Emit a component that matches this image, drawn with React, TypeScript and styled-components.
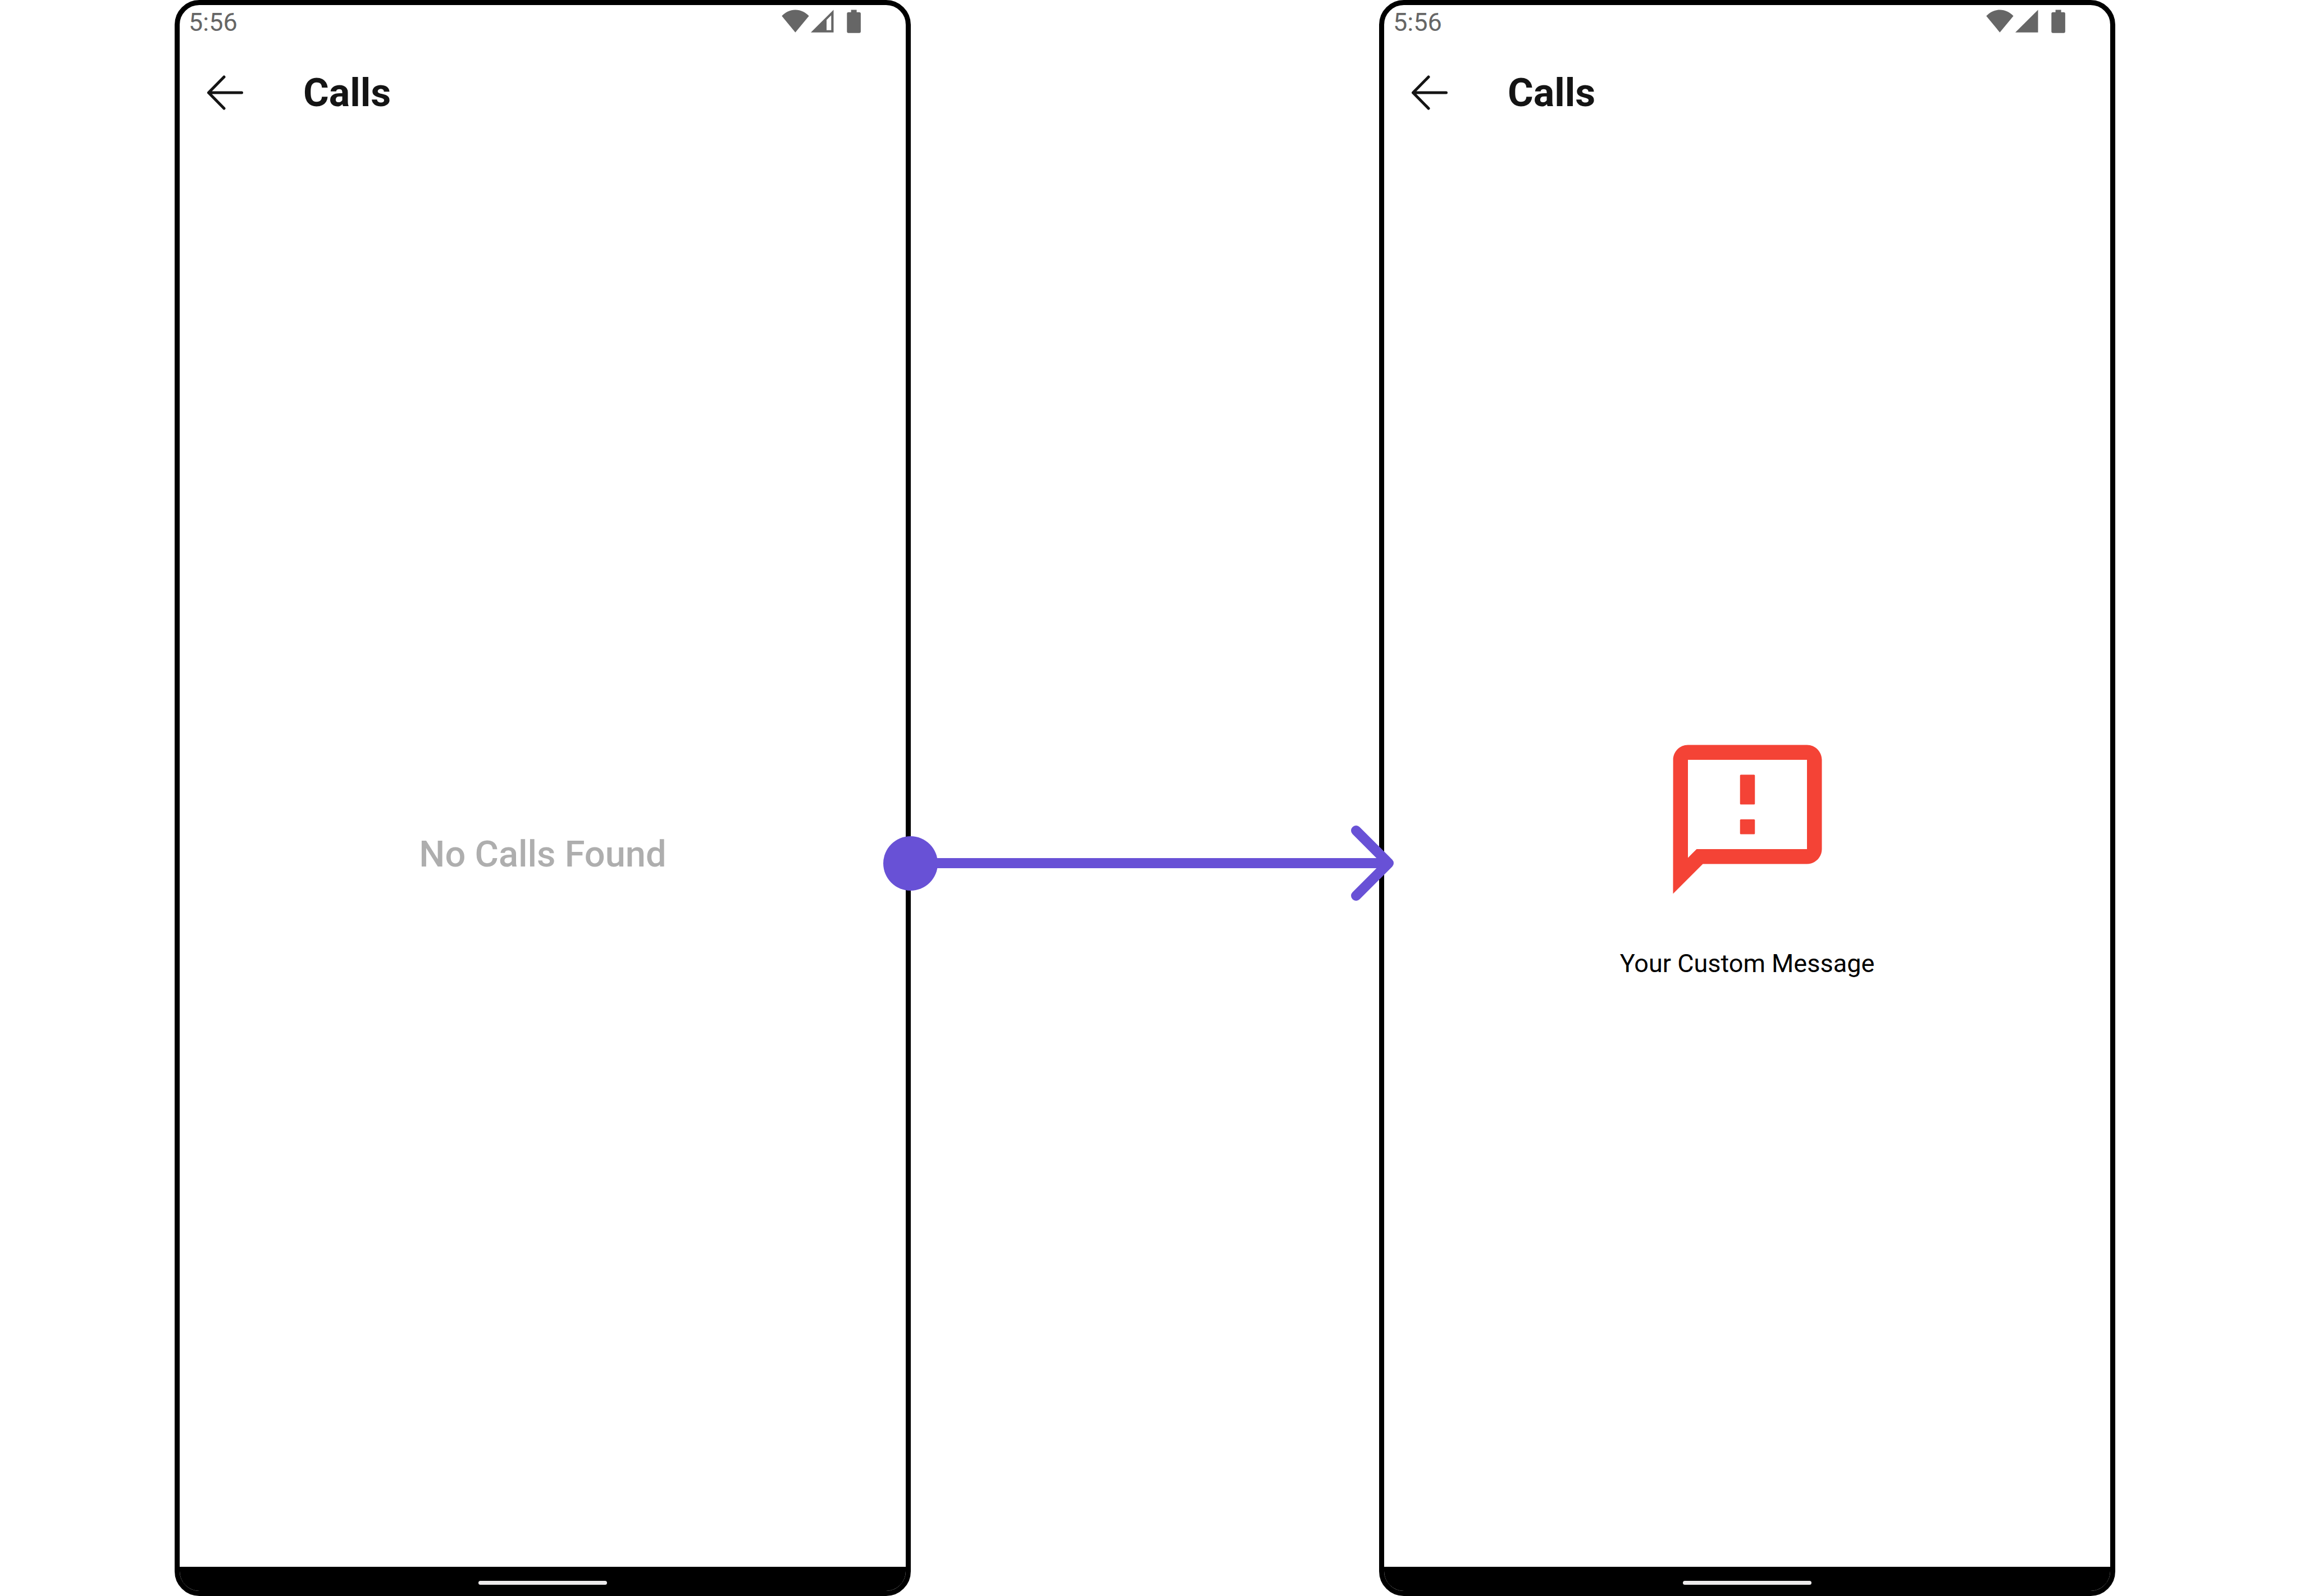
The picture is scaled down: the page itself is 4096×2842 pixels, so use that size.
import React from "react";
import styled, { createGlobalStyle } from "styled-components";

const GlobalStyle = createGlobalStyle`
  *, *::before, *::after { box-sizing: border-box; }
  body {
    margin: 0;
    background: #ffffff;
    font-family: Roboto, "Noto Sans", sans-serif;
  }
`;

const accent = "#6851d6";
const statusGrey = "#666666";

const Stage = styled.main`
  display: grid;
  grid-template-columns: 311fr 1311fr 834fr 1311fr 329fr;
  min-height: 100vh;
`;

const Phone = styled.section<{ $column: number }>`
  grid-column: ${(p) => p.$column};
  grid-row: 1;
  display: flex;
  flex-direction: column;
  min-width: 0;
  border: 9px solid #000000;
  border-radius: 44px;
  background: #ffffff;
  overflow: hidden;
`;

const StatusBar = styled.div`
  display: flex;
  align-items: center;
  justify-content: space-between;
  height: 62px;
  padding: 0 80px 0 16px;
  color: ${statusGrey};
`;

const Clock = styled.time`
  font-size: 45px;
  line-height: 52px;
`;

const StatusIcons = styled.div`
  display: flex;
  align-items: flex-start;
  height: 46px;
`;

const StatusIcon = styled.svg<{ $gap?: number }>`
  display: block;
  flex: none;
  margin-left: ${(p) => p.$gap ?? 0}px;
  fill: currentColor;
`;

const AppBar = styled.header`
  display: flex;
  align-items: center;
  gap: 106px;
  height: 181px;
  padding: 6px 48px 0;
`;

const BackButton = styled.button`
  display: flex;
  padding: 0;
  border: 0;
  background: none;
  color: #141414;
  cursor: pointer;
`;

const Title = styled.h1`
  margin: 0;
  color: #141414;
  font-size: 70px;
  font-weight: 700;
  line-height: 84px;
`;

const Content = styled.div`
  flex: 1;
  display: flex;
  flex-direction: column;
  align-items: center;
  justify-content: center;
  gap: 72px;
`;

const EmptyText = styled.p`
  margin: 0;
  color: #aeaeae;
  font-size: 65px;
  font-weight: 500;
  line-height: 76px;
`;

const CustomText = styled.p`
  margin: 0;
  color: #000000;
  font-size: 45px;
  line-height: 52px;
`;

const NavBar = styled.footer`
  display: flex;
  justify-content: center;
  height: 43px;
  padding-top: 25px;
  background: #000000;
`;

const HomePill = styled.div`
  width: 229px;
  height: 7px;
  border-radius: 4px;
  background: #eceaeb;
`;

const ConnectorColumn = styled.div`
  grid-column: 3;
  grid-row: 1;
  position: relative;
  z-index: 1;
`;

const Connector = styled.div`
  position: absolute;
  top: calc(50% + 116px);
  left: -49px;
  right: -26px;
  display: flex;
  align-items: center;
  transform: translateY(-50%);
`;

const Dot = styled.div`
  flex: none;
  width: 97px;
  height: 97px;
  border-radius: 50%;
  background: ${accent};
`;

const Line = styled.div`
  flex: 1;
  height: 18px;
  margin: 0 -66px 0 -4px;
  background: ${accent};
`;

const ArrowHead = styled.svg`
  flex: none;
  display: block;
`;

function WifiIcon() {
  return (
    <StatusIcon width="49" height="42" viewBox="0 0 49 42" aria-hidden="true">
      <path d="M0.3 11.6C6.5 4.6 15 0.5 24.4 0.5S42.300 4.600 48.600 11.600L24.400 40.700Z" />
    </StatusIcon>
  );
}

function SignalIcon({ full }: { full: boolean }) {
  return (
    <StatusIcon $gap={3} width="41" height="42" viewBox="0 0 41 42" aria-hidden="true">
      <path
        fillRule="evenodd"
        d={full ? "M0 40.800L40.500 0.500V40.800Z" : "M0 40.800L40.500 0.500V40.800ZM28 18.500V36.800H36.300V10.300Z"}
      />
    </StatusIcon>
  );
}

function BatteryIcon() {
  return (
    <StatusIcon $gap={23} width="25" height="42" viewBox="0 0 25 42" aria-hidden="true">
      <path d="M7.600 0.500H17.600V4.800H22.200A2.700 2.700 0 0 1 24.900 7.500V39A2.700 2.700 0 0 1 22.200 41.700H3A2.700 2.700 0 0 1 0.300 39V7.500A2.700 2.700 0 0 1 3 4.800H7.600Z" />
    </StatusIcon>
  );
}

function BackIcon() {
  return (
    <svg width="66" height="62" viewBox="0 0 66 62" fill="none" stroke="currentColor" strokeWidth="5" strokeLinecap="round" strokeLinejoin="round" aria-hidden="true">
      <path d="M31 3L3.500 31L31 59M3.500 31H62.500" />
    </svg>
  );
}

function FeedbackIcon() {
  return (
    <svg width="318" height="318" viewBox="0 0 24 24" fill="#f44336" aria-hidden="true">
      <path d="M20 2H4c-1.100 0-1.990.9-1.990 2L2 22l4-4h14c1.100 0 2-.9 2-2V4c0-1.100-.9-2-2-2zm0 14H5.170l-.59.59-.58.58V4h16v12z" />
      <rect x="11" y="6" width="2" height="4" rx="0.120" />
      <rect x="11" y="12" width="2" height="2" rx="0.120" />
    </svg>
  );
}

interface CallsPhoneProps {
  column: number;
  fullSignal: boolean;
  children: React.ReactNode;
}

function CallsPhone({ column, fullSignal, children }: CallsPhoneProps) {
  return (
    <Phone $column={column}>
      <StatusBar>
        <Clock>5:56</Clock>
        <StatusIcons>
          <WifiIcon />
          <SignalIcon full={fullSignal} />
          <BatteryIcon />
        </StatusIcons>
      </StatusBar>
      <AppBar>
        <BackButton type="button" aria-label="Back">
          <BackIcon />
        </BackButton>
        <Title>Calls</Title>
      </AppBar>
      <Content>{children}</Content>
      <NavBar>
        <HomePill />
      </NavBar>
    </Phone>
  );
}

export default function App() {
  return (
    <>
      <GlobalStyle />
      <Stage>
        <CallsPhone column={2} fullSignal={false}>
          <EmptyText>No Calls Found</EmptyText>
        </CallsPhone>
        <ConnectorColumn>
          <Connector>
            <Dot />
            <Line />
            <ArrowHead width="76" height="134" viewBox="0 0 76 134" fill="none" stroke={accent} strokeWidth="18" strokeLinecap="round" strokeLinejoin="round" aria-hidden="true">
              <path d="M9 9L67 67L9 125" />
            </ArrowHead>
          </Connector>
        </ConnectorColumn>
        <CallsPhone column={4} fullSignal>
          <FeedbackIcon />
          <CustomText>Your Custom Message</CustomText>
        </CallsPhone>
      </Stage>
    </>
  );
}
